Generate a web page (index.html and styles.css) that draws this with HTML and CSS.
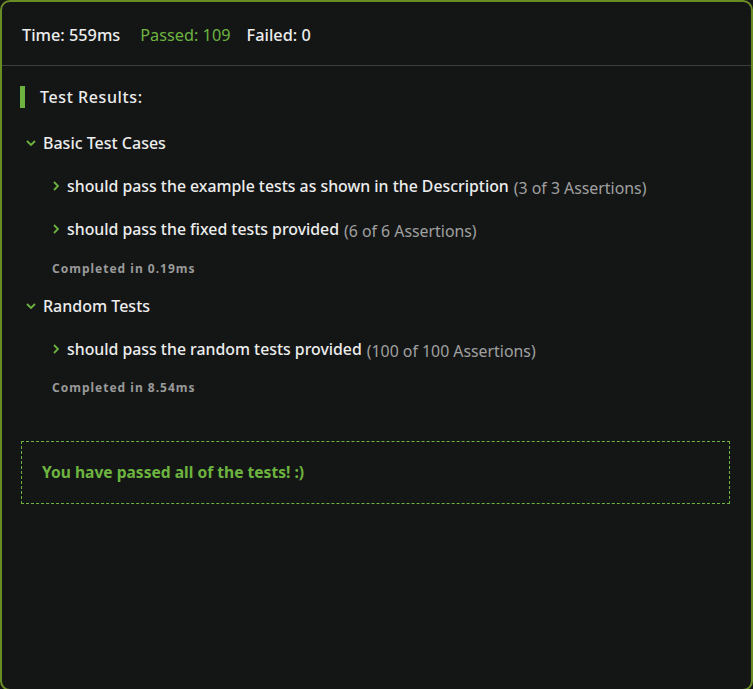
FILE: index.html
```html
<!DOCTYPE html>
<html>
<head>
<meta charset="utf-8">
<link rel="stylesheet" href="styles.css">
</head>
<body>
<div class="frame">
  <div class="header">
    <span class="stat">Time: 559ms</span>
    <span class="stat passed">Passed: 109</span>
    <span class="stat">Failed: 0</span>
  </div>
  <div class="results">
    <div class="title"><span class="bar"></span><span>Test Results:</span></div>

    <div class="group">
      <div class="group-head"><svg class="chev-down" width="10" height="6" viewBox="0 0 10 6"><path d="M1 1 L5 5 L9 1" fill="none" stroke="#6db33f" stroke-width="1.8"/></svg><span>Basic Test Cases</span></div>
      <div class="item"><svg class="chev-right" width="6" height="10" viewBox="0 0 6 10"><path d="M1 1 L5 5 L1 9" fill="none" stroke="#6db33f" stroke-width="1.8"/></svg><span>should pass the example tests as shown in the Description</span><span class="assert">(3 of 3 Assertions)</span></div>
      <div class="item"><svg class="chev-right" width="6" height="10" viewBox="0 0 6 10"><path d="M1 1 L5 5 L1 9" fill="none" stroke="#6db33f" stroke-width="1.8"/></svg><span>should pass the fixed tests provided</span><span class="assert">(6 of 6 Assertions)</span></div>
      <div class="completed">Completed in 0.19ms</div>
    </div>

    <div class="group">
      <div class="group-head"><svg class="chev-down" width="10" height="6" viewBox="0 0 10 6"><path d="M1 1 L5 5 L9 1" fill="none" stroke="#6db33f" stroke-width="1.8"/></svg><span>Random Tests</span></div>
      <div class="item"><svg class="chev-right" width="6" height="10" viewBox="0 0 6 10"><path d="M1 1 L5 5 L1 9" fill="none" stroke="#6db33f" stroke-width="1.8"/></svg><span>should pass the random tests provided</span><span class="assert">(100 of 100 Assertions)</span></div>
      <div class="completed">Completed in 8.54ms</div>
    </div>

    <div class="passbox">You have passed all of the tests! :)</div>
  </div>
</div>
</body>
</html>
```
FILE: styles.css
```css
html, body {
  margin: 0;
  padding: 0;
  background: #141616;
}
body {
  font-family: "Noto Sans", "Open Sans", sans-serif;
  color: #ededed;
}
.frame {
  box-sizing: border-box;
  width: 753px;
  min-height: 691px;
  border: 2px solid #6a8c24;
  border-radius: 10px;
  background: #141616;
}
.header {
  box-sizing: border-box;
  height: 64px;
  padding: 3px 20px 0;
  display: flex;
  align-items: center;
  border-bottom: 1px solid #3c3e3e;
  font-size: 16.3px;
  font-weight: 500;
}
.stat { margin-right: 20px; }
.stat.passed { color: #6db33f; font-weight: 400; margin-right: 16px; }
.results {
  padding: 20px 18px;
}
.title {
  display: flex;
  align-items: center;
  height: 22px;
  font-size: 16px;
  font-weight: 500;
  letter-spacing: 0.6px;
}
.bar {
  width: 5px;
  height: 22px;
  background: #6db33f;
  margin-right: 15px;
}
.group-head {
  display: flex;
  align-items: center;
  height: 22px;
  margin-top: 24px;
  font-size: 16px;
  font-weight: 500;
  padding-left: 6px;
}
.chev-down { margin-right: 7px; }
.item {
  display: flex;
  align-items: center;
  height: 22px;
  margin-top: 21px;
  padding-left: 33px;
  font-size: 15.85px;
  font-weight: 500;
}
.chev-right { margin-right: 8px; }
.assert {
  color: #a0a0a0;
  font-weight: 400;
  margin-left: 5px;
  position: relative;
  top: 2px;
}
.completed {
  margin-top: 21px;
  padding-left: 32px;
  height: 16px;
  line-height: 16px;
  font-size: 12px;
  font-weight: bold;
  color: #9a9a9a;
  letter-spacing: 1px;
}
.group + .group .group-head { margin-top: 18px; }
.group + .group .item { margin-top: 21px; }
.group + .group .completed { margin-top: 20px; }
.passbox {
  margin: 45px 3px 0 1px;
  border: 1px dashed #6db33f;
  padding: 19px 20px 20px;
  line-height: 22px;
  font-size: 15.6px;
  font-weight: bold;
  color: #6db33f;
}
```
